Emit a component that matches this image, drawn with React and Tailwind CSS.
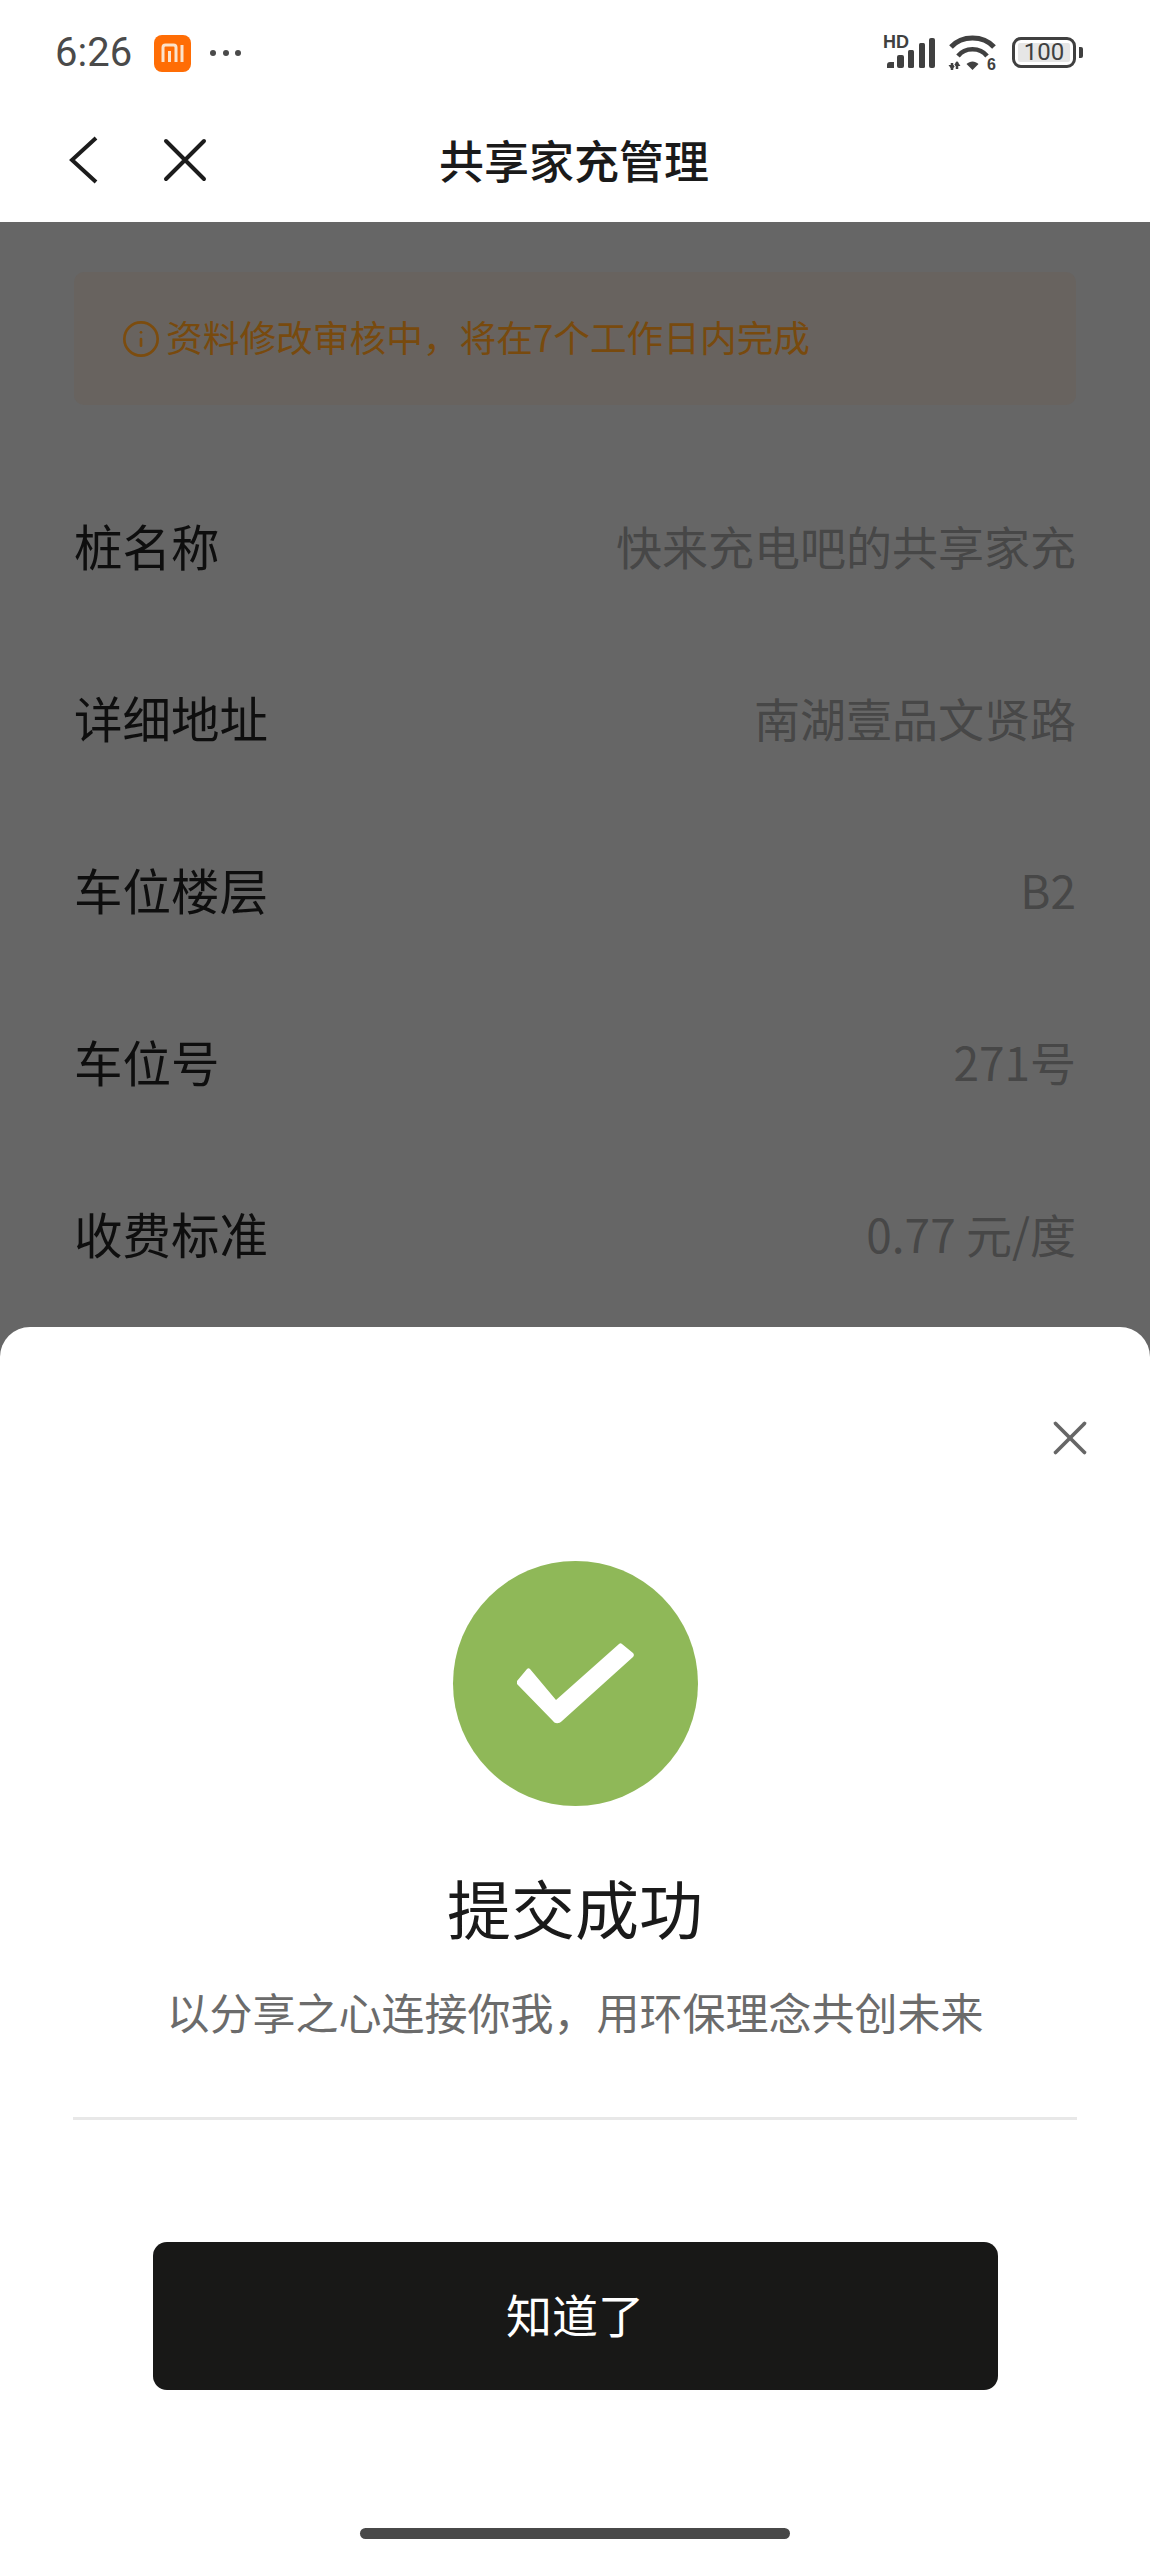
import { Info, X } from 'lucide-react';

const FONT = "font-['Noto_Sans_CJK_SC','Noto_Sans',sans-serif]";

const rows = [
  { label: '桩名称', value: '快来充电吧的共享家充' },
  { label: '详细地址', value: '南湖壹品文贤路' },
  { label: '车位楼层', value: 'B2' },
  { label: '车位号', value: '271号' },
  { label: '收费标准', value: '0.77 元/度' },
];

const StatusBar = () => (
  <div className="h-[100px] flex items-start justify-between pt-[33px] pl-[55px] pr-[67px]">
    <div className="flex items-center">
      <span className="font-['Roboto',sans-serif] text-[40px] leading-[40px] text-[#4a4a4a]">6:26</span>
      <div className="ml-[22px] w-[37px] h-[37px] rounded-[8px] bg-[#ff6d05] flex items-center justify-center">
        <svg width="24" height="20" viewBox="0 0 24 20" fill="none" stroke="#fbe3cc" strokeWidth="3">
          <path d="M2 19V4.500A2.500 2.500 0 0 1 4.500 2h8A2.500 2.500 0 0 1 15 4.500V19" />
          <path d="M8.500 8v11" />
          <path d="M21 2v17" />
        </svg>
      </div>
      <div className="ml-[19px] flex items-center gap-[6.5px]">
        <div className="w-[6px] h-[6px] rounded-full bg-[#4a4a4a]" />
        <div className="w-[6px] h-[6px] rounded-full bg-[#4a4a4a]" />
        <div className="w-[6px] h-[6px] rounded-full bg-[#4a4a4a]" />
      </div>
    </div>

    <div className="flex items-start">
      {/* signal */}
      <div className="relative w-[54px] h-[34px] mt-[3px]">
        <span className="absolute left-[2px] top-[-2px] font-['Liberation_Sans',sans-serif] font-bold text-[18px] leading-[16px] text-[#404040]">HD</span>
        <svg className="absolute left-0 top-0" width="54" height="34" viewBox="0 0 54 34" fill="#404040">
          <path d="M6 32v-3a3 3 0 0 1 3-3h4v6z" />
          <rect x="16" y="19" width="7" height="13" rx="2" />
          <rect x="27" y="14" width="6" height="18" rx="1.500" />
          <rect x="38" y="7" width="6" height="25" rx="1.500" />
          <rect x="48" y="2" width="6" height="30" rx="2" />
        </svg>
      </div>
      {/* wifi */}
      <div className="relative w-[50px] h-[36px] ml-[12px] mt-[2px]">
        <svg className="absolute left-0 top-0" width="50" height="36" viewBox="0 0 50 36" fill="none" stroke="#404040" strokeWidth="5">
          <path d="M4 12C15 0 36 0 47 12" />
          <path d="M11 21C18 12 33 12 40 21" strokeWidth="4.500" />
          <path d="M19.500 29C23 25.500 28 25.500 31.500 29L25.500 35z" fill="#404040" stroke="none" />
          <path d="M5 28v7M10 27v7" strokeWidth="2.500" />
          <path d="M1.500 30h7L5 35zM6.500 31h7L10 26z" fill="#404040" stroke="none" />
        </svg>
        <span className="absolute right-[1px] bottom-[-1px] font-['Liberation_Sans',sans-serif] font-bold text-[16px] leading-[14px] text-[#404040]">6</span>
      </div>
      {/* battery */}
      <div className="ml-[15px] mt-[4px] flex items-center">
        <div className="w-[64px] h-[31px] rounded-[9px] border-[3px] border-[#404040] p-[3px] flex">
          <div className="flex-1 bg-[#e6e6e6] rounded-[2px] flex items-center justify-center font-['Roboto',sans-serif] text-[24px] leading-[19px] text-[#404040]">100</div>
        </div>
        <div className="ml-[3px] w-[4px] h-[11px] rounded-r-[2px] bg-[#404040]" />
      </div>
    </div>
  </div>
);

const NavBar = () => (
  <div className="h-[122px] relative flex items-center justify-center">
    <div className="absolute left-[69px] top-[36px] flex items-center">
      <svg width="29" height="48" viewBox="0 0 29 48" fill="none" stroke="#1c1c1c" strokeWidth="4" strokeLinejoin="miter">
        <path d="M27 2L3 24l24 22" />
      </svg>
      <svg className="ml-[65px]" width="44" height="44" viewBox="0 0 44 44" fill="none" stroke="#1c1c1c" strokeWidth="4" strokeLinecap="round">
        <path d="M3 3l38 38M41 3L3 41" />
      </svg>
    </div>
    <h1 className="text-[45px] leading-[60px] font-medium text-[#1a1a1a] mb-[3px] mr-[2px]">共享家充管理</h1>
  </div>
);

const App = () => {
  return (
    <div className={`${FONT} relative w-[1150px] h-[2556px] overflow-hidden bg-white`}>
      <StatusBar />
      <NavBar />

      {/* dimmed page */}
      <div className="h-[2334px] bg-[#666666] px-[74px] pt-[50px]">
        <div className="h-[133px] rounded-[10px] bg-[#68635f] pl-[47px] flex items-center gap-[5px]">
          <Info size={40} strokeWidth={1.6} className="text-[#7c4c0e]" />
          <span className="text-[36.7px] leading-[50px] text-[#784a0e] mb-[5px]">资料修改审核中，将在7个工作日内完成</span>
        </div>
        <div className="mt-[54px]">
          {rows.map((row) => (
            <div key={row.label} className="h-[172px] flex items-center justify-between">
              <span className="text-[48.5px] leading-[64px] text-[#0e0e0e]">{row.label}</span>
              <span className="text-[46px] leading-[64px] text-[#474747]">{row.value}</span>
            </div>
          ))}
        </div>
      </div>

      {/* success sheet */}
      <div className="absolute left-0 right-0 bottom-0 h-[1229px] bg-white rounded-t-[30px] flex flex-col items-center pt-[234px]">
        <button className="absolute right-[51px] top-[82px] text-[#666666]">
          <X size={58} strokeWidth={1.5} />
        </button>

        <div className="w-[245px] h-[245px] rounded-full bg-[#8fb858] flex items-center justify-center">
          <svg width="117" height="81" viewBox="0 0 117 81" fill="white">
            <path d="M10 26L0 38a3 3 0 0 0 0 3l36 37c2 3 6 3 9 0l71-64a3 3 0 0 0 0-4L105 1a2 2 0 0 0-3 0L39 57 13 26a2 2 0 0 0-3 0z" />
          </svg>
        </div>

        <h2 className="mt-[60px] text-[64px] leading-[80px] text-[#1a1a1a]">提交成功</h2>
        <p className="mt-[35px] text-[43px] leading-[60px] text-[#6b6b6b]">以分享之心连接你我，用环保理念共创未来</p>

        <div className="mt-[76px] w-[1004px] h-[3px] bg-[#e8e8e8]" />

        <button className="mt-[122px] w-[845px] h-[148px] rounded-[14px] bg-[#181817] text-white text-[46px] leading-[60px] pb-[7px]">
          知道了
        </button>

        <div className="mt-[138px] w-[430px] h-[11px] rounded-full bg-[#484848]" />
      </div>
    </div>
  );
};

export default App;
